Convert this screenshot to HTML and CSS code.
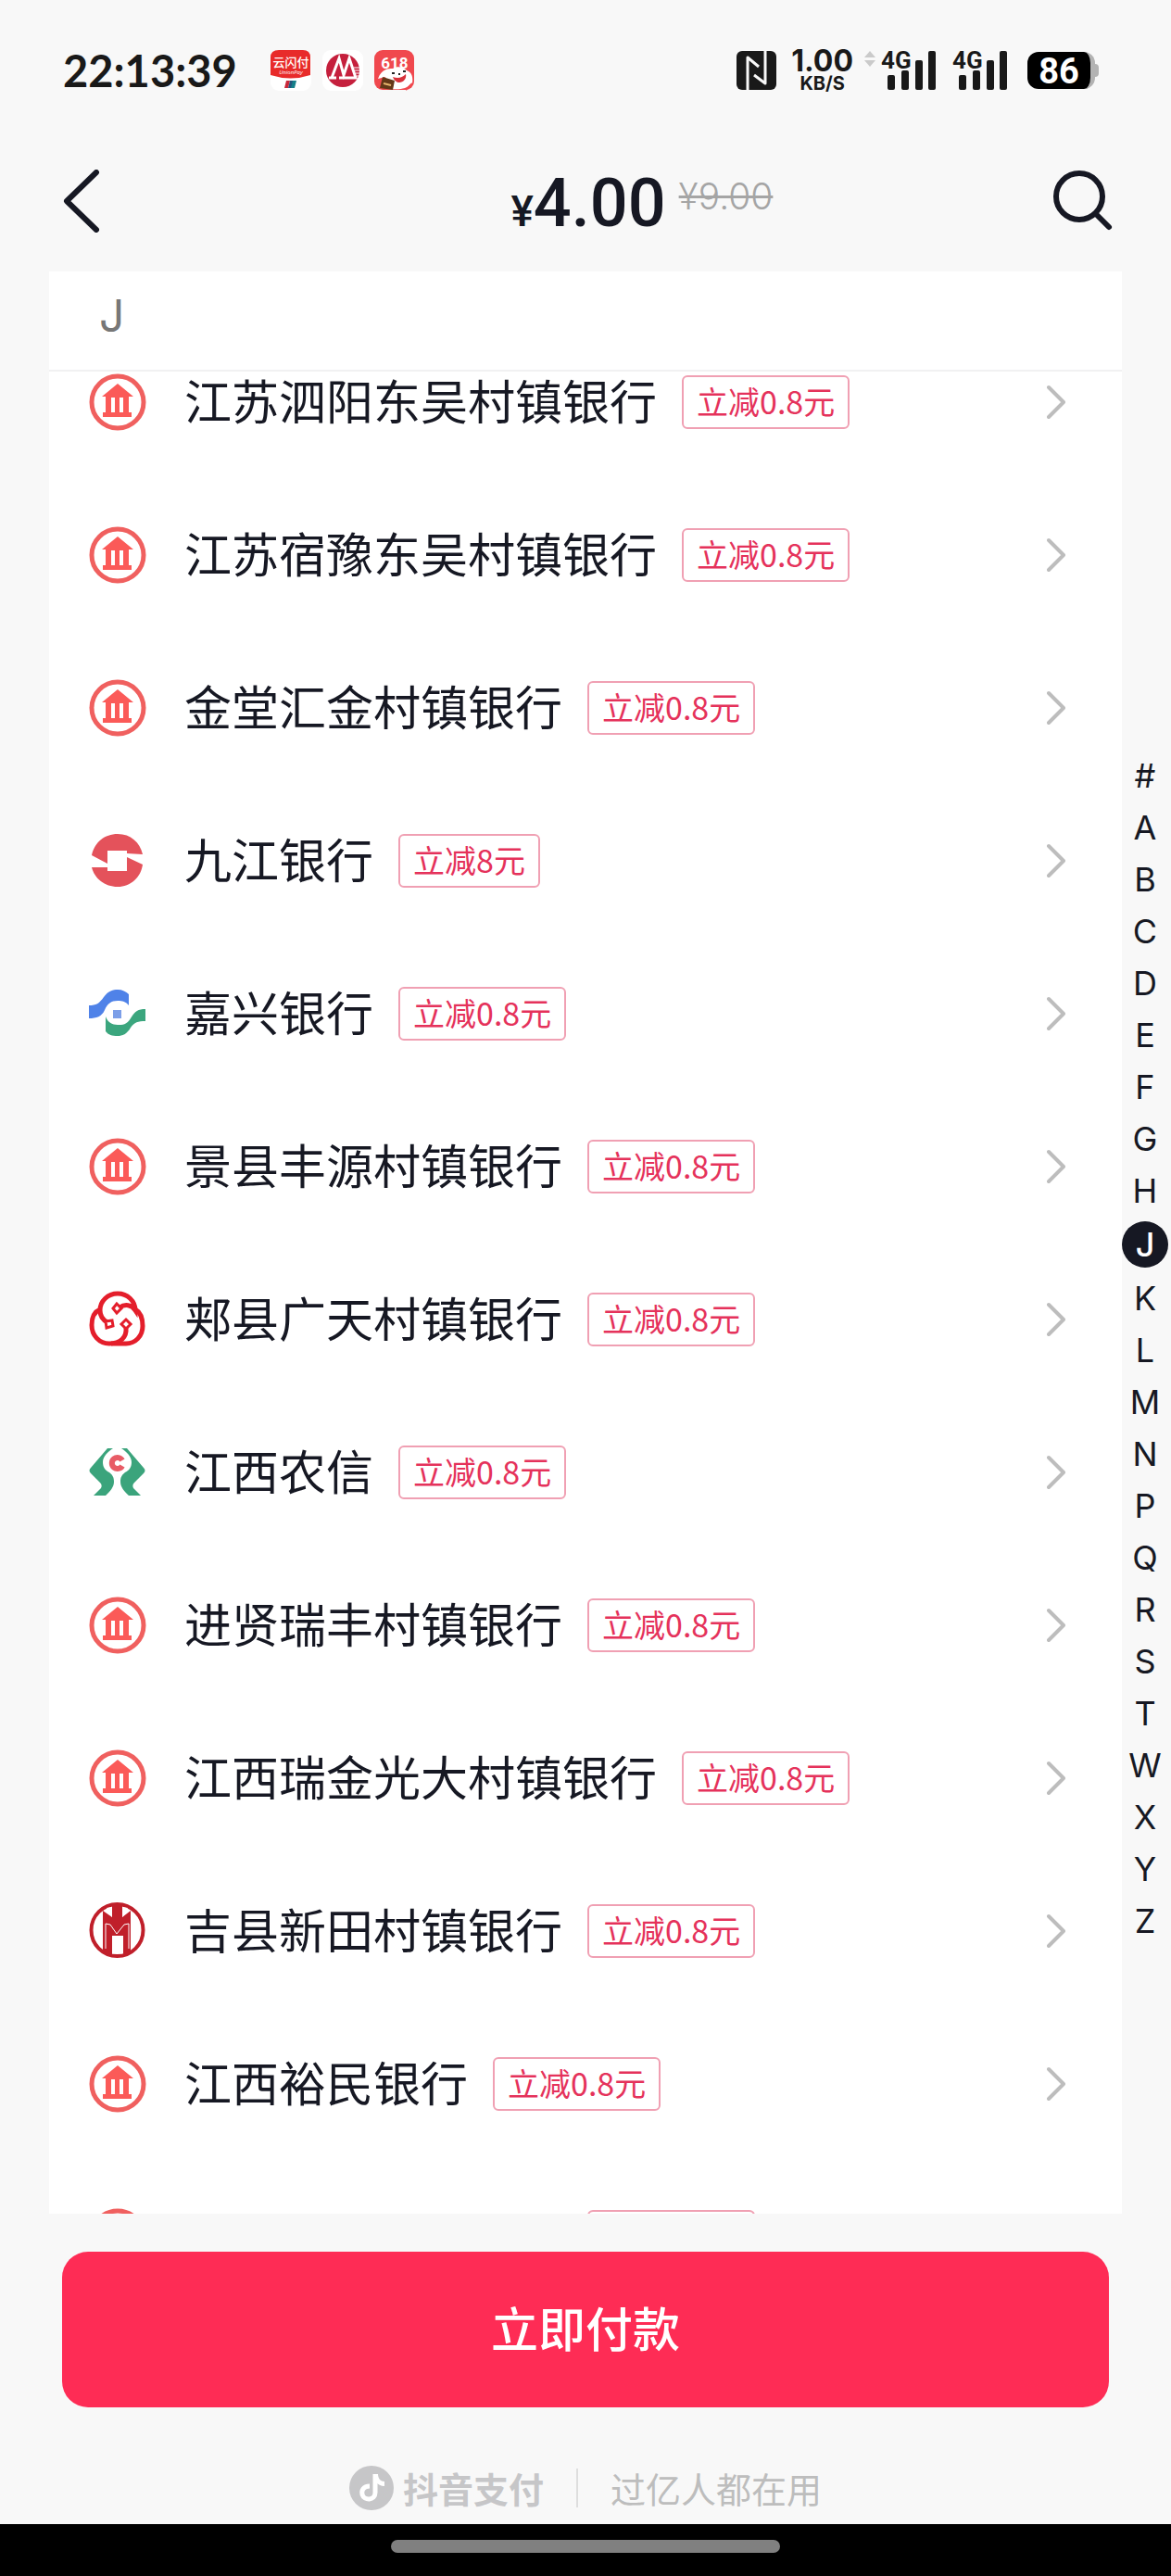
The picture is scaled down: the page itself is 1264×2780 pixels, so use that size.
FILE: index.html
```
<!DOCTYPE html>
<html lang="zh-CN">
<head>
  <meta charset="UTF-8" />
  <meta name="viewport" content="width=device-width, initial-scale=1.0" />
  <title>选择银行 | 抖音支付</title>
  <link rel="stylesheet" href="styles.css">
</head>
<body>

  <!-- Shared icons -->
  <svg class="sprite" aria-hidden="true">
    <symbol id="bank" viewBox="0 0 62 62">
      <circle cx="31" cy="31" r="28" fill="none" stroke="#f0605f" stroke-width="5" />
      <path fill="#fb5a58" d="M31 11 48 25H43V42H46V47H15V42H18V25H14ZM24 26V42H28V26ZM33 26V42H37V26Z" />
    </symbol>
    <symbol id="jiujiang" viewBox="0 0 62 62">
      <path fill="#e4525b" d="M3 25C6 11 17 2 31 2S55 11 58 24L41 23V20H20V34Z" />
      <path fill="#e4525b" d="M3 38H20V42H41V27L58 35C56 49 45 59 31 59S6 50 3 38Z" />
    </symbol>
    <symbol id="jiaxing" viewBox="0 0 62 62">
      <path fill="#4f82e8" d="M0 22C8 22 11 20 16 13C21 6 26 5 31 5C36 5 40 7 43 10V22C40 18 36 17 31 17C24 17 20 20 17 27C14 34 8 36 0 36Z" />
      <path fill="#3ba67e" d="M61 26C53 26 50 28 45 36C41 43 36 43 31 43C25 43 20 40 18 34V50C21 54 25 55 31 55C36 55 41 53 45 46C49 40 53 39 61 39Z" />
      <path fill="#7c9fe8" d="M26 27H35V36H26Z" />
    </symbol>
    <symbol id="jiaxian" viewBox="0 0 62 62">
      <g fill="none" stroke="#e41e2b" stroke-width="5">
        <path d="M20 34C14 31 12 27 12 21A19 18 0 0 1 50 21C46 15 39 14 33 18" />
        <path d="M12 20C5 23 3 30 3 37C3 48 11 57 22 57C34 57 41 50 40 40" />
        <path d="M50 20C55 23 58 30 58 38C58 49 50 57 40 57H24" />
      </g>
      <g fill="#fff" stroke="#e41e2b" stroke-width="3">
        <path d="M30 14 35 19 30 24 26 19Z" />
        <path d="M18 33 25 32 26 38 19 40Z" />
        <path d="M40 31 45 36 40 41 35 36Z" />
      </g>
    </symbol>
    <symbol id="nongxin" viewBox="0 0 62 62">
      <path id="hand" fill="#3ba47c" d="M20 5H26C20 9 15 14 15 20C15 26 18 29 22 31C26 34 27 37 27 41C27 47 23 51 18 56H5L13 48C14 46 14 44 12 42L2 32C0 30 0 28 2 26Z" />
      <use href="#hand" transform="matrix(-1 0 0 1 61 0)" />
      <path fill="none" stroke="#e85c66" stroke-width="6" d="M36 18A6 6 0 1 0 36 24" />
    </symbol>
    <symbol id="jixian" viewBox="0 0 62 62">
      <circle cx="30.500" cy="30" r="28" fill="#fff" stroke="#c01f2a" stroke-width="4" />
      <path fill="#c01f2a" d="M25 3H36V16L45 9V54L37 58V36H25V58L15 54V9L25 16Z" />
      <path fill="#fff" d="M19 6 25 5V16ZM42 6 36 5V16Z" />
      <path fill="none" stroke="#fff" d="M18 50V23L23 24 30 34 38 24 43 23V50" />
    </symbol>
    <symbol id="chevron" viewBox="0 0 20 38">
      <path fill="none" stroke="#bdbdbd" stroke-width="4" stroke-linecap="round" stroke-linejoin="round" d="M2 3 18 19 2 35" />
    </symbol>
    <symbol id="signal" viewBox="0 0 54 42">
      <path fill="#191919" d="M2 26H6Q8 26 8 28V40Q8 42 6 42H2Q0 42 0 40V28Q0 26 2 26ZM17 21H21Q23 21 23 23V40Q23 42 21 42H17Q15 42 15 40V23Q15 21 17 21ZM32 10H36Q38 10 38 12V40Q38 42 36 42H32Q30 42 30 40V12Q30 10 32 10ZM46 0H50Q52 0 52 2V40Q52 42 50 42H46Q44 42 44 40V2Q44 0 46 0Z" />
    </symbol>
  </svg>

  <div class="status">
    <time class="clock">22:13:39</time>
    <div class="notices">
      <svg viewBox="0 0 44 44" width="44" height="44">
        <rect width="44" height="44" rx="9" fill="#fff" />
        <path fill="#e82b2a" d="M9 0H35Q43 0 43 8V27Q22 34 0 27V8Q0 0 9 0Z" />
        <text class="unionpay" x="22" y="18" text-anchor="middle">云闪付</text>
        <text class="unionpay-en" x="22" y="26" text-anchor="middle">UnionPay</text>
        <path fill="#c9283a" d="M17 33H21L19 41H15Z" />
        <path fill="#26547c" d="M21 33H25L23 41H19Z" />
        <path fill="#15808a" d="M24 33H28L26 41H22Z" />
      </svg>
      <svg viewBox="0 0 44 44" width="44" height="44">
        <rect width="44" height="44" rx="9" fill="#fff" />
        <circle cx="22" cy="22" r="18" fill="#c5203d" />
        <path fill="none" stroke="#fff" stroke-width="3" d="M7 30H15M10 30 18 9 23 27 29 9 36 30H18" />
        <path fill="none" stroke="#fff" stroke-width="1" d="M34 19H42M35 22H42M36 25H42M37 28H42" />
      </svg>
      <svg viewBox="0 0 44 44" width="44" height="44">
        <rect width="43" height="43" rx="9" fill="#f0484e" />
        <text class="promo" x="22" y="20" text-anchor="middle">618</text>
        <path fill="#fff" d="M4 31C8 20 15 20 20 20C25 17 31 18 35 22C41 24 42 30 41 36C35 42 27 43 18 42C12 40 13 33 12 29Z" />
        <path fill="#d7323b" d="M20 29Q28 32 34 26C36 34 24 40 20 29Z" />
        <path fill="none" stroke="#222" stroke-width="2" d="M19 25H22M31 23H34M26 26H28" />
        <path fill="#633818" d="M9 29 22 33 20 43 6 41Z" />
        <path stroke="#e5b46d" stroke-width="2" d="M10 36 18 38" />
        <path stroke="#f0484e" stroke-width="2" d="M34 43 41 36" />
      </svg>
    </div>
    <div class="system">
      <svg viewBox="0 0 43 42" width="43" height="42">
        <rect width="43" height="42" rx="6" fill="#191919" />
        <path fill="none" stroke="#f8f8f8" stroke-width="3" stroke-linejoin="round" d="M12 42V7L24 17M31 0V35L19 26" />
      </svg>
      <div class="speed"><b>1.00</b><span>KB/S</span></div>
      <svg class="traffic" viewBox="0 0 12 42" width="12" height="42">
        <path fill="#cacaca" d="M6 0 12 7H0ZM0 10H12L6 17Z" />
      </svg>
      <div class="signal"><span>4G</span><svg width="54" height="42"><use href="#signal" /></svg></div>
      <div class="signal"><span>4G</span><svg width="54" height="42"><use href="#signal" /></svg></div>
      <div class="battery">86</div>
    </div>
  </div>

  <header class="nav">
    <a class="nav-btn" href="#" aria-label="返回">
      <svg viewBox="0 0 40 68" width="40" height="68">
        <path fill="none" stroke="#161823" stroke-width="6" stroke-linecap="round" stroke-linejoin="round" d="M36 3 4 34 36 65" />
      </svg>
    </a>
    <h1 class="price"><small>¥</small>4.00</h1>
    <div class="nav-right">
      <del class="old-price">¥9.00</del>
      <button class="nav-btn" type="button" aria-label="搜索">
        <svg viewBox="0 0 66 66" width="66" height="66">
          <circle cx="29" cy="28" r="25" fill="none" stroke="#161823" stroke-width="6" />
          <path stroke="#161823" stroke-width="6" stroke-linecap="round" d="M47 47 61 61" />
        </svg>
      </button>
    </div>
  </header>

  <main class="content">
    <section class="card">
      <h2 class="group">J</h2>
      <ul class="banks">
        <li><a class="bank" href="#"><svg class="logo"><use href="#bank" /></svg><span class="name">江苏泗阳东吴村镇银行</span><em class="tag">立减0.8元</em><svg class="chevron"><use href="#chevron" /></svg></a></li>
        <li><a class="bank" href="#"><svg class="logo"><use href="#bank" /></svg><span class="name">江苏宿豫东吴村镇银行</span><em class="tag">立减0.8元</em><svg class="chevron"><use href="#chevron" /></svg></a></li>
        <li><a class="bank" href="#"><svg class="logo"><use href="#bank" /></svg><span class="name">金堂汇金村镇银行</span><em class="tag">立减0.8元</em><svg class="chevron"><use href="#chevron" /></svg></a></li>
        <li><a class="bank" href="#"><svg class="logo"><use href="#jiujiang" /></svg><span class="name">九江银行</span><em class="tag">立减8元</em><svg class="chevron"><use href="#chevron" /></svg></a></li>
        <li><a class="bank" href="#"><svg class="logo"><use href="#jiaxing" /></svg><span class="name">嘉兴银行</span><em class="tag">立减0.8元</em><svg class="chevron"><use href="#chevron" /></svg></a></li>
        <li><a class="bank" href="#"><svg class="logo"><use href="#bank" /></svg><span class="name">景县丰源村镇银行</span><em class="tag">立减0.8元</em><svg class="chevron"><use href="#chevron" /></svg></a></li>
        <li><a class="bank" href="#"><svg class="logo"><use href="#jiaxian" /></svg><span class="name">郏县广天村镇银行</span><em class="tag">立减0.8元</em><svg class="chevron"><use href="#chevron" /></svg></a></li>
        <li><a class="bank" href="#"><svg class="logo"><use href="#nongxin" /></svg><span class="name">江西农信</span><em class="tag">立减0.8元</em><svg class="chevron"><use href="#chevron" /></svg></a></li>
        <li><a class="bank" href="#"><svg class="logo"><use href="#bank" /></svg><span class="name">进贤瑞丰村镇银行</span><em class="tag">立减0.8元</em><svg class="chevron"><use href="#chevron" /></svg></a></li>
        <li><a class="bank" href="#"><svg class="logo"><use href="#bank" /></svg><span class="name">江西瑞金光大村镇银行</span><em class="tag">立减0.8元</em><svg class="chevron"><use href="#chevron" /></svg></a></li>
        <li><a class="bank" href="#"><svg class="logo"><use href="#jixian" /></svg><span class="name">吉县新田村镇银行</span><em class="tag">立减0.8元</em><svg class="chevron"><use href="#chevron" /></svg></a></li>
        <li><a class="bank" href="#"><svg class="logo"><use href="#bank" /></svg><span class="name">江西裕民银行</span><em class="tag">立减0.8元</em><svg class="chevron"><use href="#chevron" /></svg></a></li>
        <li><a class="bank" href="#"><svg class="logo"><use href="#bank" /></svg><span class="name">靖安九银村镇银行</span><em class="tag">立减0.8元</em><svg class="chevron"><use href="#chevron" /></svg></a></li>
      </ul>
    </section>

    <nav class="index" aria-label="字母索引">
      <a href="#">#</a>
      <a href="#">A</a>
      <a href="#">B</a>
      <a href="#">C</a>
      <a href="#">D</a>
      <a href="#">E</a>
      <a href="#">F</a>
      <a href="#">G</a>
      <a href="#">H</a>
      <a class="active" href="#">J</a>
      <a href="#">K</a>
      <a href="#">L</a>
      <a href="#">M</a>
      <a href="#">N</a>
      <a href="#">P</a>
      <a href="#">Q</a>
      <a href="#">R</a>
      <a href="#">S</a>
      <a href="#">T</a>
      <a href="#">W</a>
      <a href="#">X</a>
      <a href="#">Y</a>
      <a href="#">Z</a>
    </nav>
  </main>

  <div class="pay">
    <button class="pay-btn" type="button">立即付款</button>
  </div>

  <footer class="footer">
    <svg viewBox="0 0 48 48" width="48" height="48">
      <circle cx="24" cy="24" r="24" fill="#c6c6c8" />
      <path fill="none" stroke="#fff" stroke-width="5" d="M22 22C15 22 13 27 14 31C16 38 28 38 28 29V9" />
      <path fill="#fff" d="M26 9H31C31 14 34 17 38 17V22C34 22 31 20 29 18Z" />
    </svg>
    <strong>抖音支付</strong>
    <i class="divider"></i>
    <span>过亿人都在用</span>
  </footer>

  <div class="home"></div>

</body>
</html>
```
FILE: styles.css
```
:root {
  --bg: #f8f8f8;
  --ink: #161823;
  --brand: #fe2c55;
  --tag: #e5325b;
}

* {
  margin: 0;
  padding: 0;
  box-sizing: border-box;
}

body {
  height: 100vh;
  display: flex;
  flex-direction: column;
  overflow: hidden;
  background: var(--bg);
  color: var(--ink);
  font-family: 'Noto Sans CJK SC', sans-serif;
}

a {
  color: inherit;
  text-decoration: none;
}

button {
  border: none;
  background: none;
  font-family: inherit;
  cursor: pointer;
}

svg {
  display: block;
  flex-shrink: 0;
}

.sprite {
  position: absolute;
  width: 0;
  height: 0;
}

/* Status bar */
.status {
  height: 152px;
  padding: 0 82px 0 68px;
  display: flex;
  align-items: center;
  color: #191919;
}

.clock {
  font: 700 47px/60px Lato, sans-serif;
}

.notices {
  margin-left: 36px;
  display: flex;
  gap: 12px;
}

.unionpay {
  font-size: 13px;
  font-weight: 500;
  fill: #fff;
}

.unionpay-en {
  font: italic 6px 'Open Sans', sans-serif;
  fill: #fff;
}

.promo {
  font: 700 17px Roboto, sans-serif;
  fill: #fff;
}

.system {
  margin-left: auto;
  display: flex;
  align-items: center;
  gap: 16px;
}

.speed {
  display: flex;
  flex-direction: column;
  align-items: center;
  font-family: Inter, sans-serif;
}

.speed b {
  font-size: 32px;
  line-height: 28px;
}

.speed span {
  font-size: 20px;
  font-weight: 700;
  line-height: 20px;
}

.traffic {
  margin: 0 -10px 0 -4px;
}

.signal {
  position: relative;
  padding-left: 7px;
}

.signal span {
  position: absolute;
  top: -2px;
  left: 0;
  font: 700 26px/24px 'Liberation Sans Narrow', Roboto, sans-serif;
}

.battery {
  position: relative;
  width: 73px;
  height: 40px;
  margin-left: 4px;
  border-radius: 12px;
  border-right: 5px solid #b3b3b3;
  background: #000;
  color: #fff;
  font: 700 38px/42px Roboto, sans-serif;
  text-align: center;
}

.battery::after {
  content: '';
  position: absolute;
  top: 13px;
  right: -9px;
  width: 4px;
  height: 14px;
  border-radius: 0 4px 4px 0;
  background: #b3b3b3;
}

/* Header */
.nav {
  height: 141px;
  padding: 0 62px 12px 68px;
  display: grid;
  grid-template-columns: 1fr auto 1fr;
  align-items: center;
}

.price {
  padding-top: 14px;
  font: 500 72px/84px Roboto, sans-serif;
}

.price small {
  font-size: 46px;
}

.nav-right {
  padding-left: 14px;
  display: flex;
  align-items: center;
  justify-content: space-between;
}

.old-price {
  padding-bottom: 10px;
  color: #a5a5a5;
  font: 300 39px/56px Inter, sans-serif;
}

/* Bank list */
.content {
  flex: 1;
  min-height: 0;
  padding: 0 3px 0 53px;
  display: grid;
  grid-template-columns: 1fr 50px;
  grid-template-rows: 100%;
}

.card {
  overflow: hidden;
  background: #fff;
}

.group {
  height: 108px;
  padding: 0 54px;
  border-bottom: 2px solid #f1f1f2;
  color: #777;
  font: 400 48px/96px Inter, sans-serif;
}

.banks {
  padding: 2px 61px 0 43px;
  display: flex;
  flex-direction: column;
  gap: 103px;
  list-style: none;
}

.bank {
  height: 62px;
  display: flex;
  align-items: center;
  white-space: nowrap;
}

.logo {
  width: 62px;
  height: 62px;
  margin-right: 41px;
}

.name {
  padding-bottom: 6px;
  font-size: 51px;
  line-height: 62px;
}

.tag {
  height: 58px;
  margin-left: 27px;
  padding: 0 14px;
  border: 2px solid #f0a0b3;
  border-radius: 6px;
  color: var(--tag);
  font-size: 34px;
  font-style: normal;
  line-height: 52px;
}

.chevron {
  width: 20px;
  height: 38px;
  margin-left: auto;
}

/* Letter index */
.index {
  padding-top: 228px;
  display: flex;
  flex-direction: column;
  justify-content: center;
  gap: 10px;
  font: 400 36px/46px Inter, sans-serif;
  text-align: center;
}

.index .active {
  border-radius: 50%;
  background: var(--ink);
  color: #fff;
  font-weight: 500;
  line-height: 50px;
}

/* Payment */
.pay {
  padding: 41px 67px 0;
}

.pay-btn {
  width: 100%;
  height: 168px;
  padding-bottom: 6px;
  border-radius: 28px;
  background: var(--brand);
  color: #fff;
  font-size: 51px;
  font-weight: 500;
}

.footer {
  padding: 63px 0 15px;
  display: flex;
  align-items: center;
  justify-content: center;
  color: #bdbdbd;
  font-size: 38px;
  line-height: 48px;
}

.footer strong {
  margin-left: 10px;
  color: #c6c6c8;
}

.divider {
  width: 2px;
  height: 42px;
  margin: 0 35px;
  background: #dedede;
}

.home {
  height: 56px;
  padding-top: 17px;
  background: #000;
}

.home::before {
  content: '';
  display: block;
  width: 420px;
  height: 14px;
  margin: 0 auto;
  border-radius: 7px;
  background: #808080;
}
```
